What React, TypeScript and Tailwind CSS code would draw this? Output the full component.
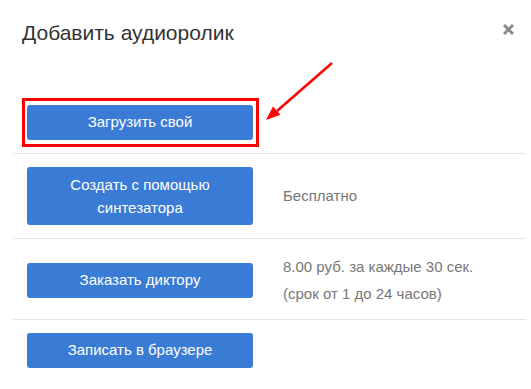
const btn =
  "w-[226px] rounded-[3px] bg-[#3a7bd5] px-3 text-center text-[15px] text-white";

function CloseIcon() {
  return (
    <svg width="11" height="11" viewBox="0 0 11 11" className="block">
      <path d="M1 1 L10 10 M10 1 L1 10" stroke="#8a8a8a" strokeWidth="3" />
    </svg>
  );
}

export default function App() {
  return (
    <div
      className="relative h-[389px] w-[531px] overflow-hidden bg-white"
      style={{ fontFamily: '"Liberation Sans", Arial, sans-serif' }}
    >
      <div className="flex items-start justify-between pl-[22px] pr-[17px] pt-[19px]">
        <h2 className="text-[21px] leading-[28px] text-[#333]">Добавить аудиоролик</h2>
        <button type="button" className="mt-[5px]" aria-label="Закрыть">
          <CloseIcon />
        </button>
      </div>

      <div className="ml-[13px] mr-[5px] mt-[58px]">
        <div className="border-b border-[#e5e5e5] pb-[13px] pl-[14px]">
          <div className="relative w-[226px]">
            <span className="pointer-events-none absolute -bottom-[7px] -left-[5px] -right-[6px] -top-[7px] border-[3px] border-[#ff0000]" />
            <button type="button" className={`${btn} h-[35px]`}>
              Загрузить свой
            </button>
          </div>
        </div>

        <div className="flex items-center gap-[30px] border-b border-[#e5e5e5] py-[13px] pl-[14px]">
          <button type="button" className={`${btn} py-[6px] leading-[23px]`}>
            Создать с помощью
            <br />
            синтезатора
          </button>
          <span className="text-[15px] text-[#777]">Бесплатно</span>
        </div>

        <div className="flex items-center gap-[30px] border-b border-[#e5e5e5] pb-[12px] pt-[14px] pl-[14px]">
          <button type="button" className={`${btn} h-[35px]`}>
            Заказать диктору
          </button>
          <div className="text-[15px] leading-[27px] text-[#777]">
            <p>8.00 руб. за каждые 30 сек.</p>
            <p>(срок от 1 до 24 часов)</p>
          </div>
        </div>

        <div className="pl-[14px] pt-[13px]">
          <button type="button" className={`${btn} h-[35px]`}>
            Записать в браузере
          </button>
        </div>
      </div>

      {/* annotation arrow */}
      <svg
        className="pointer-events-none absolute left-0 top-0"
        width="531"
        height="389"
        viewBox="0 0 531 389"
      >
        <line x1="332" y1="63" x2="277" y2="111" stroke="#ff0000" strokeWidth="2.5" />
        <polygon points="266,120 280.5,114.8 273,106.6" fill="#ff0000" />
      </svg>
    </div>
  );
}
